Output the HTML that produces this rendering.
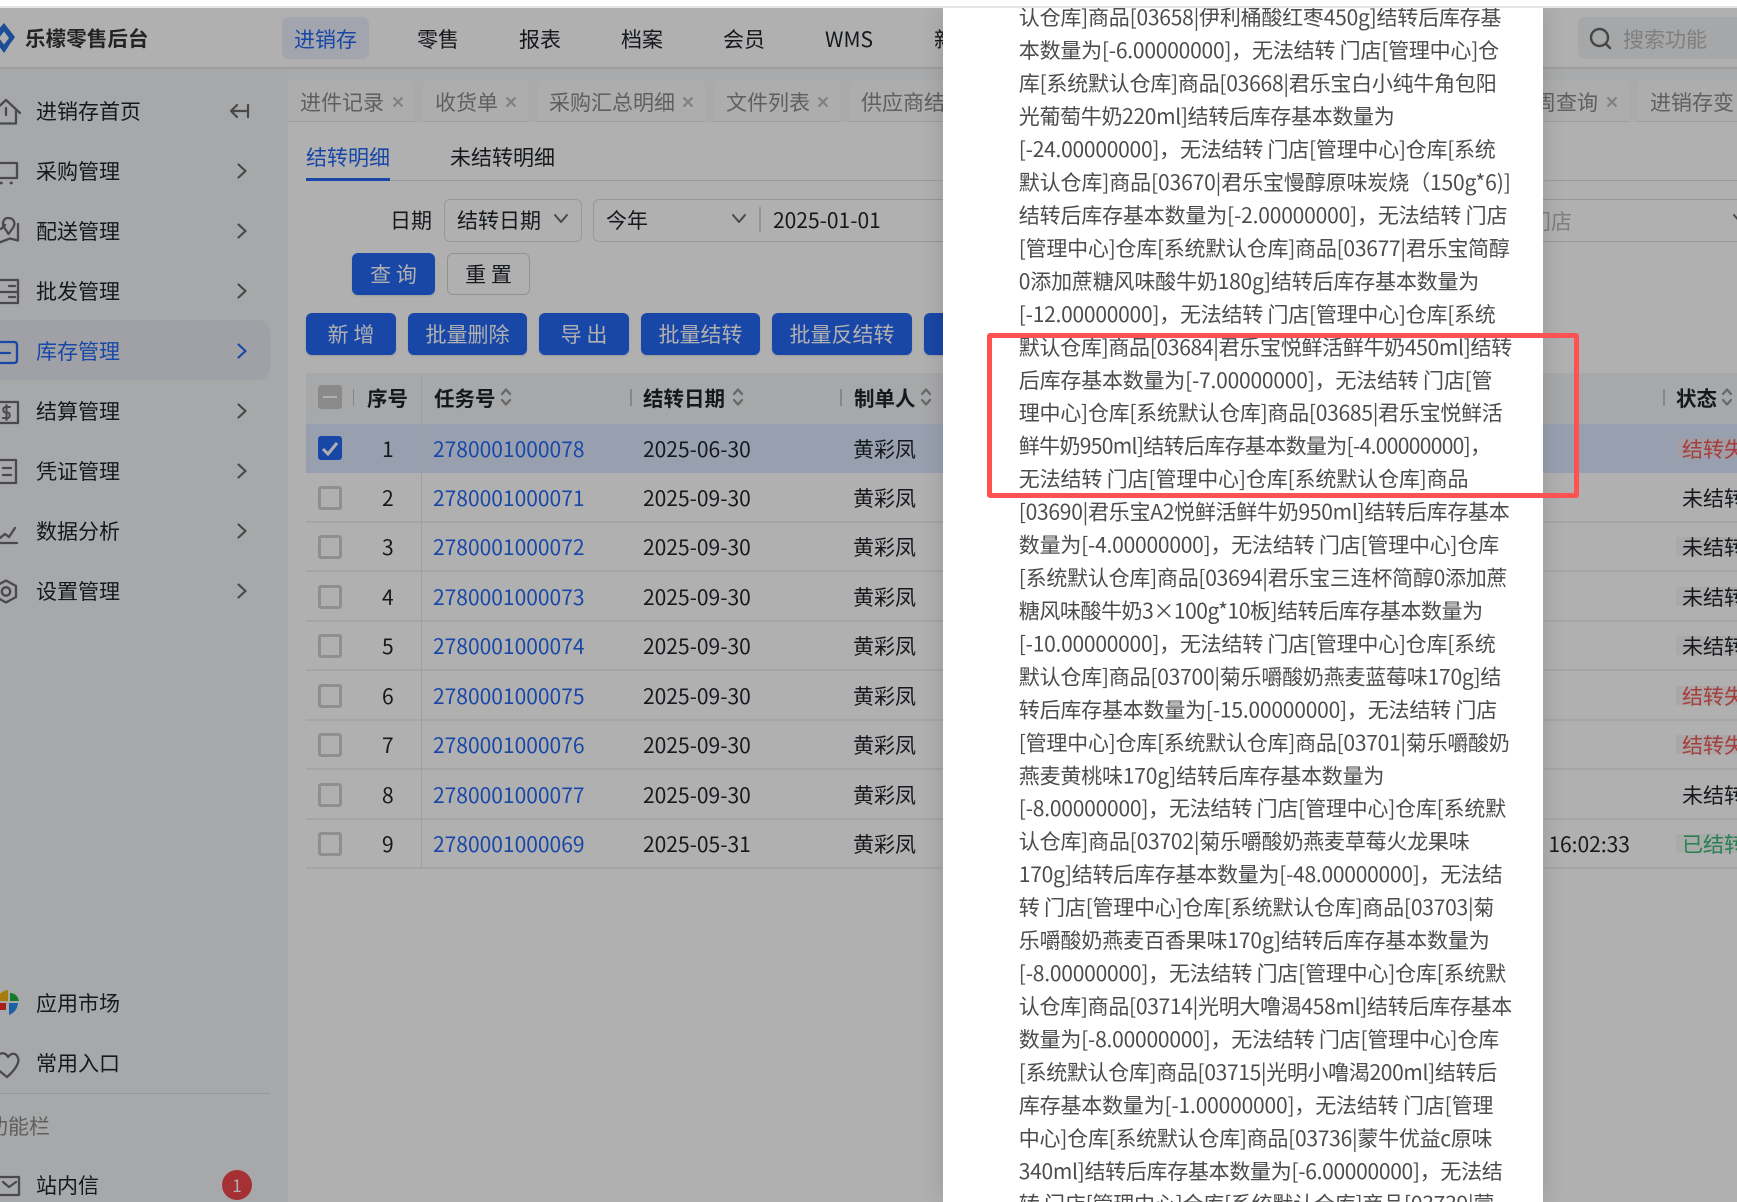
<!DOCTYPE html>
<html lang="zh"><head><meta charset="utf-8"><title>乐檬零售后台</title>
<style>
html,body{margin:0;padding:0;width:1737px;height:1202px;overflow:hidden;background:#fff}
body{position:relative;font-family:"Noto Sans CJK SC","Liberation Sans",sans-serif;color:#1f2329}
#p{position:absolute;left:0;top:8px;width:1737px;height:1194px;overflow:hidden;background:#fff}
#in{position:absolute;left:0;top:-8px;width:1737px;height:1202px}
.a{position:absolute}
.t{position:absolute;white-space:nowrap;font-size:21px;line-height:30px}
.b{position:absolute;background:#2468f2;color:#fff;border-radius:6px;height:42px;line-height:43px;font-size:21px;text-align:center;white-space:nowrap;box-shadow:0 1px 2px rgba(0,0,0,.12)}
.tab{position:absolute;top:80px;height:41px;background:#fbfbfb;border-radius:6px 6px 0 0;border-bottom:1px solid #e4e4e4}
.g{color:#8a8a8a}.bl{color:#2468f2}.h{font-weight:700}
.cb{position:absolute;left:318px;width:18px;height:18px;border:3px solid #d0d0d0;border-radius:3px;background:#fff}
.l{position:absolute;left:306px;width:1431px;height:2px;background:#efefef}
.st{position:absolute;left:1676px;width:61px;height:19px}
svg.i{position:absolute;overflow:visible;fill:none;stroke:#6a6a6a;stroke-width:2;stroke-linecap:round;stroke-linejoin:round}
#ov{position:absolute;left:0;top:8px;width:1737px;height:1194px;background:rgba(0,0,0,.31)}
#m{position:absolute;left:943px;top:8px;width:600px;height:1194px;background:#fff;box-shadow:0 0 22px rgba(0,0,0,.14)}
#mt{position:absolute;left:-.5px;top:.6px;width:1737px;height:1202px}
#mt text{font-family:"Noto Sans CJK SC","Liberation Sans",sans-serif;font-size:21px;fill:#4c4c4c}
#s1{position:absolute;left:0;top:0;width:1737px;height:6px;background:#fff}
#s2{position:absolute;left:0;top:6px;width:1737px;height:2px;background:#e6e6e6}
#rr{position:absolute;left:987px;top:333px;width:582px;height:155px;border:5px solid #ff5252;border-radius:3px}
</style></head><body>
<svg width="0" height="0" style="position:absolute"><defs>
<symbol id="ch" viewBox="0 0 10 16"><path d="M1.5 1.5L8.5 8L1.5 14.5" fill="none" stroke="#6a6a6a" stroke-width="2.2" stroke-linecap="round" stroke-linejoin="round"/></symbol>
<symbol id="so" viewBox="0 0 12 22"><path d="M2 8L6 3.500L10 8M2 14L6 18.500L10 14" fill="none" stroke="#969696" stroke-width="2.200" stroke-linecap="round" stroke-linejoin="round"/></symbol>
<symbol id="xx" viewBox="0 0 12 12"><path d="M1.500 1.500L10.500 10.500M10.500 1.500L1.500 10.500" fill="none" stroke="#bcbcbc" stroke-width="2.200"/></symbol>
</defs></svg>
<div id="p"><div id="in">
<!-- header -->
<div class="a" style="left:0;top:67px;width:1737px;height:2px;background:#e4e4e4"></div>
<svg class="a" style="left:0;top:0" width="20" height="60" viewBox="0 0 20 60"><path d="M4 23L15 37L4 53L-8 37Z" fill="#2a72d8"/><path d="M4 31.500L9 38L4 44.500L-1 38Z" fill="#fff"/><path d="M8 26L12 31" stroke="#fff" stroke-width="1"/><path d="M12 42L8 48" stroke="#fff" stroke-width="1"/></svg>
<div class="t h" style="left:25px;top:22px;color:#333;letter-spacing:.1px;font-size:20.5px">乐檬零售后台</div>
<div class="a" style="left:282px;top:17px;width:87px;height:42px;border-radius:7px;background:#ebf0fb"></div>
<div class="t bl" style="left:294px;top:24px">进销存</div>
<div class="t" style="left:417px;top:24px">零售</div>
<div class="t" style="left:519px;top:24px">报表</div>
<div class="t" style="left:621px;top:24px">档案</div>
<div class="t" style="left:723px;top:24px">会员</div>
<div class="t" style="left:825px;top:24px">WMS</div>
<div class="t" style="left:934px;top:24px">新</div>
<div class="a" style="left:1578px;top:17px;width:170px;height:42px;border-radius:7px;background:#f1f2f4"></div>
<svg class="i" style="left:1589px;top:27px;stroke:#666;stroke-width:2.4" width="24" height="24" viewBox="0 0 24 24"><circle cx="10.500" cy="10.500" r="8.500"/><path d="M17 17L21 21"/></svg>
<div class="t" style="left:1623px;top:24px;color:#b8b8b8">搜索功能</div>
<!-- sidebar -->
<div class="a" style="left:0;top:69px;width:288px;height:1133px;background:#f2f3f5"></div>
<div class="a" style="left:-12px;top:320px;width:282px;height:60px;border-radius:12px;background:#e7e9f1"></div>
<div class="t" style="left:36px;top:96px">进销存首页</div>
<div class="t" style="left:36px;top:156px">采购管理</div>
<div class="t" style="left:36px;top:216px">配送管理</div>
<div class="t" style="left:36px;top:276px">批发管理</div>
<div class="t bl" style="left:36px;top:336px">库存管理</div>
<div class="t" style="left:36px;top:396px">结算管理</div>
<div class="t" style="left:36px;top:456px">凭证管理</div>
<div class="t" style="left:36px;top:516px">数据分析</div>
<div class="t" style="left:36px;top:576px">设置管理</div>
<div class="t" style="left:36px;top:988px">应用市场</div>
<div class="t" style="left:36px;top:1048px">常用入口</div>
<div class="t g" style="left:-13px;top:1111px">功能栏</div>
<div class="t" style="left:36px;top:1170px">站内信</div>
<div class="a" style="left:0;top:1093px;width:270px;height:1px;background:#dcdcdc"></div>
<div class="a" style="left:222px;top:1170px;width:30px;height:30px;border-radius:50%;background:#f0484e;color:#fff;text-align:center;font-size:17px;line-height:30px">1</div>
<!-- sidebar icons: absolute page coordinates -->
<svg class="i" style="left:0;top:0;stroke:#6c6c72;stroke-width:2.300" width="30" height="1202" viewBox="0 0 30 1202">
<path d="M-8 113L6 100L20 113M16 110V123.500H-4M6 108V115"/>
<path d="M0 163H17V178H0"/><path d="M1 183h.4M11 183h.4" stroke-width="2.800"/>
<path d="M1 229L5 225M8 218C3 218 2 224 4 227L8.500 234L13.500 227C16 222 13 218 8 218ZM18 224V240.500L10 238.500L-2 243"/>
<path d="M0 280H18V303H0M0 292H18M9 286H15M9 297H15"/>
<path d="M0 402H18V423H0"/><path d="M10 407H5.500C2.500 407 2.500 412.500 5.500 412.500H7.500C10.500 412.500 10.500 418 7.500 418H3M6.500 405V420" stroke-width="2"/>
<path d="M0 460H16V483H0M3 468H11M3 475H11"/>
<path d="M0 538L5 534L9 537L15 528M0 543H17"/>
<path d="M6 580.500L16 586V597L6 602.500L-4 597V586Z"/><circle cx="6" cy="591.500" r="4.200"/>
<path d="M-2 1055C2 1052 6 1053 8 1057C11 1053 16 1052 18 1058C20 1063 14 1071 7 1077L-3 1069"/>
<path d="M0 1177H19V1195H0M3 1182L9 1187L16 1182"/>
</svg>
<svg class="i" style="left:0;top:0;stroke:#2468f2;stroke-width:2.300" width="30" height="400" viewBox="0 0 30 400"><path d="M0 342H14Q17 342 17 345V360Q17 363 14 363H0M0 353H10"/></svg>
<svg class="a" style="left:-1px;top:990px" width="21" height="26" viewBox="0 0 21 26"><path d="M0 11V5Q3 1 9 0V11Z" fill="#f2b40f"/><path d="M11 3Q18 3 20 11H11Z" fill="#1fb53a"/><path d="M0 13H7V20H0Z" fill="#ef2e2e"/><path d="M10 13H19Q18 22 10 25Z" fill="#2c8cf0"/></svg>
<svg class="a" style="left:229px;top:103px" width="21" height="16" viewBox="0 0 21 16"><path d="M8 2L2 8L8 14M2 8H17M19 2V14" fill="none" stroke="#6a6a6a" stroke-width="2.200" stroke-linecap="round" stroke-linejoin="round"/></svg>
<svg class="a" style="left:237px;top:163px" width="10" height="16"><use href="#ch"/></svg>
<svg class="a" style="left:237px;top:223px" width="10" height="16"><use href="#ch"/></svg>
<svg class="a" style="left:237px;top:283px" width="10" height="16"><use href="#ch"/></svg>
<svg class="a" style="left:237px;top:343px" width="10" height="16" viewBox="0 0 10 16"><path d="M1.500 1.500L8.500 8L1.500 14.500" fill="none" stroke="#2468f2" stroke-width="2.200" stroke-linecap="round" stroke-linejoin="round"/></svg>
<svg class="a" style="left:237px;top:403px" width="10" height="16"><use href="#ch"/></svg>
<svg class="a" style="left:237px;top:463px" width="10" height="16"><use href="#ch"/></svg>
<svg class="a" style="left:237px;top:523px" width="10" height="16"><use href="#ch"/></svg>
<svg class="a" style="left:237px;top:583px" width="10" height="16"><use href="#ch"/></svg>
<!-- tabs -->
<div class="a" style="left:288px;top:69px;width:1449px;height:53px;background:#f5f6f8"></div>
<div class="a" style="left:288px;top:122px;width:1449px;height:1080px;background:#fff"></div>
<div class="tab" style="left:288px;width:126px"></div><div class="t g" style="left:300px;top:87px">进件记录</div><svg class="a" style="left:392px;top:96px" width="12" height="12"><use href="#xx"/></svg>
<div class="tab" style="left:423px;width:105px"></div><div class="t g" style="left:435px;top:87px">收货单</div><svg class="a" style="left:505px;top:96px" width="12" height="12"><use href="#xx"/></svg>
<div class="tab" style="left:537px;width:168px"></div><div class="t g" style="left:549px;top:87px">采购汇总明细</div><svg class="a" style="left:682px;top:96px" width="12" height="12"><use href="#xx"/></svg>
<div class="tab" style="left:714px;width:126px"></div><div class="t g" style="left:726px;top:87px">文件列表</div><svg class="a" style="left:817px;top:96px" width="12" height="12"><use href="#xx"/></svg>
<div class="tab" style="left:849px;width:120px"></div><div class="t g" style="left:861px;top:87px">供应商结</div>
<div class="tab" style="left:1500px;width:129px"></div><div class="t g" style="left:1535px;top:87px">周查询</div><svg class="a" style="left:1606px;top:96px" width="12" height="12"><use href="#xx"/></svg>
<div class="tab" style="left:1637px;width:110px"></div><div class="t g" style="left:1650px;top:87px">进销存变</div>
<!-- subtabs -->
<div class="t bl" style="left:306px;top:142px">结转明细</div>
<div class="t" style="left:450px;top:142px">未结转明细</div>
<div class="a" style="left:306px;top:180px;width:1431px;height:1px;background:#e2e2e2"></div>
<div class="a" style="left:306px;top:178px;width:84px;height:3px;background:#2468f2"></div>
<!-- filters -->
<div class="t" style="left:390px;top:205px">日期</div>
<div class="a" style="left:444px;top:199px;width:136px;height:41px;border:1px solid #dcdcdc;border-radius:6px"></div>
<div class="t" style="left:457px;top:205px">结转日期</div>
<svg class="i" style="left:553px;top:213px;stroke:#6a6a6a" width="16" height="12" viewBox="0 0 16 12"><path d="M2 2L8 9L14 2"/></svg>
<div class="a" style="left:593px;top:199px;width:1150px;height:41px;border:1px solid #dcdcdc;border-radius:6px"></div>
<div class="t" style="left:606px;top:205px">今年</div>
<svg class="i" style="left:731px;top:213px;stroke:#6a6a6a" width="16" height="12" viewBox="0 0 16 12"><path d="M2 2L8 9L14 2"/></svg>
<div class="a" style="left:759px;top:207px;width:2px;height:25px;background:#d8d8d8"></div>
<div class="t" style="left:773px;top:205px">2025-01-01</div>
<div class="t" style="left:1530px;top:206px;color:#b8b8b8">门店</div>
<svg class="i" style="left:1732px;top:213px;stroke:#6a6a6a" width="16" height="12" viewBox="0 0 16 12"><path d="M2 2L8 9L14 2"/></svg>
<!-- buttons -->
<div class="b" style="left:352px;top:253px;width:83px">查 询</div>
<div class="b" style="left:447px;top:253px;width:81px;height:40px;line-height:41px;background:#fff;color:#1f2329;border:1px solid #d4d4d4;box-shadow:none">重 置</div>
<div class="b" style="left:306px;top:313px;width:90px">新 增</div>
<div class="b" style="left:408px;top:313px;width:119px">批量删除</div>
<div class="b" style="left:539px;top:313px;width:90px">导 出</div>
<div class="b" style="left:641px;top:313px;width:119px">批量结转</div>
<div class="b" style="left:772px;top:313px;width:140px">批量反结转</div>
<div class="b" style="left:924px;top:313px;width:140px"></div>
<!-- table -->
<div class="a" style="left:306px;top:373px;width:1431px;height:51px;background:#f2f3f5"></div>
<div class="a" style="left:306px;top:424px;width:1431px;height:49px;background:#dce8ff"></div>
<div class="l" style="top:521px"></div><div class="l" style="top:570px"></div><div class="l" style="top:620px"></div><div class="l" style="top:669px"></div><div class="l" style="top:719px"></div><div class="l" style="top:768px"></div><div class="l" style="top:818px"></div><div class="l" style="top:867px"></div>
<div class="a" style="left:421px;top:373px;width:1px;height:495px;background:#e6e6e6"></div>
<div class="cb" style="top:385px;background:#c8c8c8;border-color:#c8c8c8"></div><div class="a" style="left:323px;top:396px;width:14px;height:2px;background:#fff"></div>
<div class="a" style="left:353px;top:389px;width:1px;height:17px;background:#c4c4c4"></div>
<div class="a" style="left:630px;top:389px;width:2px;height:17px;background:#c4c4c4"></div>
<div class="a" style="left:840px;top:389px;width:2px;height:17px;background:#c4c4c4"></div>
<div class="a" style="left:1663px;top:389px;width:2px;height:17px;background:#c4c4c4"></div>
<div class="t h" style="left:367px;top:382px;font-size:20.5px">序号</div>
<div class="t h" style="left:434px;top:382px;font-size:20.5px">任务号</div>
<svg class="a" style="left:500px;top:386px" width="12" height="22"><use href="#so"/></svg>
<div class="t h" style="left:643px;top:382px;font-size:20.500px">结转日期</div>
<svg class="a" style="left:732px;top:386px" width="12" height="22"><use href="#so"/></svg>
<div class="t h" style="left:854px;top:382px;font-size:20.500px">制单人</div>
<svg class="a" style="left:920px;top:386px" width="12" height="22"><use href="#so"/></svg>
<div class="t h" style="left:1676px;top:382px;font-size:20.500px">状态</div>
<svg class="a" style="left:1721px;top:386px" width="12" height="22"><use href="#so"/></svg>
<!-- rows -->
<div class="cb" style="top:436px;background:#2468f2;border-color:#2468f2"></div>
<svg class="a" style="left:318px;top:436px" width="24" height="24" viewBox="0 0 24 24"><path d="M5 13L10 18L19 7" fill="none" stroke="#fff" stroke-width="3"/></svg>
<div class="cb" style="top:486px"></div><div class="cb" style="top:535px"></div><div class="cb" style="top:585px"></div><div class="cb" style="top:634px"></div><div class="cb" style="top:684px"></div><div class="cb" style="top:733px"></div><div class="cb" style="top:783px"></div><div class="cb" style="top:832px"></div>
<div class="t" style="left:382px;top:434px">1</div><div class="t" style="left:382px;top:483px">2</div><div class="t" style="left:382px;top:532px">3</div><div class="t" style="left:382px;top:582px">4</div><div class="t" style="left:382px;top:631px">5</div><div class="t" style="left:382px;top:681px">6</div><div class="t" style="left:382px;top:730px">7</div><div class="t" style="left:382px;top:780px">8</div><div class="t" style="left:382px;top:829px">9</div>
<div class="t bl" style="left:433px;top:434px">2780001000078</div><div class="t bl" style="left:433px;top:483px">2780001000071</div><div class="t bl" style="left:433px;top:532px">2780001000072</div><div class="t bl" style="left:433px;top:582px">2780001000073</div><div class="t bl" style="left:433px;top:631px">2780001000074</div><div class="t bl" style="left:433px;top:681px">2780001000075</div><div class="t bl" style="left:433px;top:730px">2780001000076</div><div class="t bl" style="left:433px;top:780px">2780001000077</div><div class="t bl" style="left:433px;top:829px">2780001000069</div>
<div class="t" style="left:643px;top:434px">2025-06-30</div><div class="t" style="left:643px;top:483px">2025-09-30</div><div class="t" style="left:643px;top:532px">2025-09-30</div><div class="t" style="left:643px;top:582px">2025-09-30</div><div class="t" style="left:643px;top:631px">2025-09-30</div><div class="t" style="left:643px;top:681px">2025-09-30</div><div class="t" style="left:643px;top:730px">2025-09-30</div><div class="t" style="left:643px;top:780px">2025-09-30</div><div class="t" style="left:643px;top:829px">2025-05-31</div>
<div class="t" style="left:853px;top:434px">黄彩凤</div><div class="t" style="left:853px;top:483px">黄彩凤</div><div class="t" style="left:853px;top:532px">黄彩凤</div><div class="t" style="left:853px;top:582px">黄彩凤</div><div class="t" style="left:853px;top:631px">黄彩凤</div><div class="t" style="left:853px;top:681px">黄彩凤</div><div class="t" style="left:853px;top:730px">黄彩凤</div><div class="t" style="left:853px;top:780px">黄彩凤</div><div class="t" style="left:853px;top:829px">黄彩凤</div>
<div class="t" style="left:1532px;top:829px">0 16:02:33</div>
<div class="st" style="top:438px;background:#e8e4f0"></div>
<div class="st" style="top:537px;background:#f5f5f5"></div><div class="st" style="top:587px;background:#f5f5f5"></div><div class="st" style="top:636px;background:#f5f5f5"></div>
<div class="st" style="top:686px;background:#f8f2f2"></div><div class="st" style="top:735px;background:#f8f2f2"></div>
<div class="st" style="top:834px;background:#f3f8f4"></div>
<div class="t" style="left:1682px;top:434px;color:#f05a5a">结转失败</div>
<div class="t" style="left:1682px;top:483px">未结转</div><div class="t" style="left:1682px;top:532px">未结转</div><div class="t" style="left:1682px;top:582px">未结转</div><div class="t" style="left:1682px;top:631px">未结转</div>
<div class="t" style="left:1682px;top:681px;color:#f05a5a">结转失败</div><div class="t" style="left:1682px;top:730px;color:#f05a5a">结转失败</div>
<div class="t" style="left:1682px;top:780px">未结转</div>
<div class="t" style="left:1682px;top:829px;color:#3cb878">已结转</div>
</div></div>
<div id="ov"></div>
<div id="m"></div>
<svg id="mt" viewBox="0 0 1737 1202">
<text x="1018.8" y="24.2" textLength="482.6">认仓库]商品[03658|伊利桶酸红枣450g]结转后库存基</text>
<text x="1018.8" y="57.2" textLength="480.3">本数量为[-6.00000000]，无法结转 门店[管理中心]仓</text>
<text x="1018.8" y="90.1" textLength="477.9">库[系统默认仓库]商品[03668|君乐宝白小纯牛角包阳</text>
<text x="1018.8" y="123.1" textLength="375.9">光葡萄牛奶220ml]结转后库存基本数量为</text>
<text x="1018.8" y="156" textLength="477">[-24.00000000]，无法结转 门店[管理中心]仓库[系统</text>
<text x="1018.8" y="189" textLength="492">默认仓库]商品[03670|君乐宝慢醇原味炭烧（150g*6)]</text>
<text x="1018.8" y="222" textLength="488.7">结转后库存基本数量为[-2.00000000]，无法结转 门店</text>
<text x="1018.8" y="254.9" textLength="491">[管理中心]仓库[系统默认仓库]商品[03677|君乐宝简醇</text>
<text x="1018.8" y="287.9" textLength="460.5">0添加蔗糖风味酸牛奶180g]结转后库存基本数量为</text>
<text x="1018.8" y="320.8" textLength="477">[-12.00000000]，无法结转 门店[管理中心]仓库[系统</text>
<text x="1018.8" y="353.8" textLength="493.4">默认仓库]商品[03684|君乐宝悦鲜活鲜牛奶450ml]结转</text>
<text x="1018.8" y="386.8" textLength="473.7">后库存基本数量为[-7.00000000]，无法结转 门店[管</text>
<text x="1018.8" y="419.7" textLength="484">理中心]仓库[系统默认仓库]商品[03685|君乐宝悦鲜活</text>
<text x="1018.8" y="452.7" textLength="472.3">鲜牛奶950ml]结转后库存基本数量为[-4.00000000]，</text>
<text x="1018.8" y="485.6" textLength="449.7">无法结转 门店[管理中心]仓库[系统默认仓库]商品</text>
<text x="1018.8" y="518.6" textLength="491">[03690|君乐宝A2悦鲜活鲜牛奶950ml]结转后库存基本</text>
<text x="1018.8" y="551.6" textLength="480.3">数量为[-4.00000000]，无法结转 门店[管理中心]仓库</text>
<text x="1018.8" y="584.5" textLength="488.7">[系统默认仓库]商品[03694|君乐宝三连杯简醇0添加蔗</text>
<text x="1018.8" y="617.5" textLength="464.3">糖风味酸牛奶3×100g*10板]结转后库存基本数量为</text>
<text x="1018.8" y="650.4" textLength="477">[-10.00000000]，无法结转 门店[管理中心]仓库[系统</text>
<text x="1018.8" y="683.4" textLength="482.6">默认仓库]商品[03700|菊乐嚼酸奶燕麦蓝莓味170g]结</text>
<text x="1018.8" y="716.3" textLength="478.4">转后库存基本数量为[-15.00000000]，无法结转 门店</text>
<text x="1018.8" y="749.3" textLength="491">[管理中心]仓库[系统默认仓库]商品[03701|菊乐嚼酸奶</text>
<text x="1018.8" y="782.3" textLength="365.6">燕麦黄桃味170g]结转后库存基本数量为</text>
<text x="1018.8" y="815.2" textLength="487.3">[-8.00000000]，无法结转 门店[管理中心]仓库[系统默</text>
<text x="1018.8" y="848.2" textLength="451">认仓库]商品[03702|菊乐嚼酸奶燕麦草莓火龙果味</text>
<text x="1018.8" y="881.2" textLength="484">170g]结转后库存基本数量为[-48.00000000]，无法结</text>
<text x="1018.8" y="914.1" textLength="475.6">转 门店[管理中心]仓库[系统默认仓库]商品[03703|菊</text>
<text x="1018.8" y="947" textLength="470.9">乐嚼酸奶燕麦百香果味170g]结转后库存基本数量为</text>
<text x="1018.8" y="980" textLength="487.3">[-8.00000000]，无法结转 门店[管理中心]仓库[系统默</text>
<text x="1018.8" y="1013" textLength="493.4">认仓库]商品[03714|光明大噜渴458ml]结转后库存基本</text>
<text x="1018.8" y="1045.9" textLength="480.3">数量为[-8.00000000]，无法结转 门店[管理中心]仓库</text>
<text x="1018.8" y="1078.9" textLength="478.4">[系统默认仓库]商品[03715|光明小噜渴200ml]结转后</text>
<text x="1018.8" y="1111.9" textLength="474.6">库存基本数量为[-1.00000000]，无法结转 门店[管理</text>
<text x="1018.8" y="1144.8" textLength="473.7">中心]仓库[系统默认仓库]商品[03736|蒙牛优益c原味</text>
<text x="1018.8" y="1177.8" textLength="484">340ml]结转后库存基本数量为[-6.00000000]，无法结</text>
<text x="1018.8" y="1210.7" textLength="475.6">转 门店[管理中心]仓库[系统默认仓库]商品[03739|蒙</text>
</svg>
<div id="s1"></div><div id="s2"></div>
<div id="rr"></div>
</body></html>
